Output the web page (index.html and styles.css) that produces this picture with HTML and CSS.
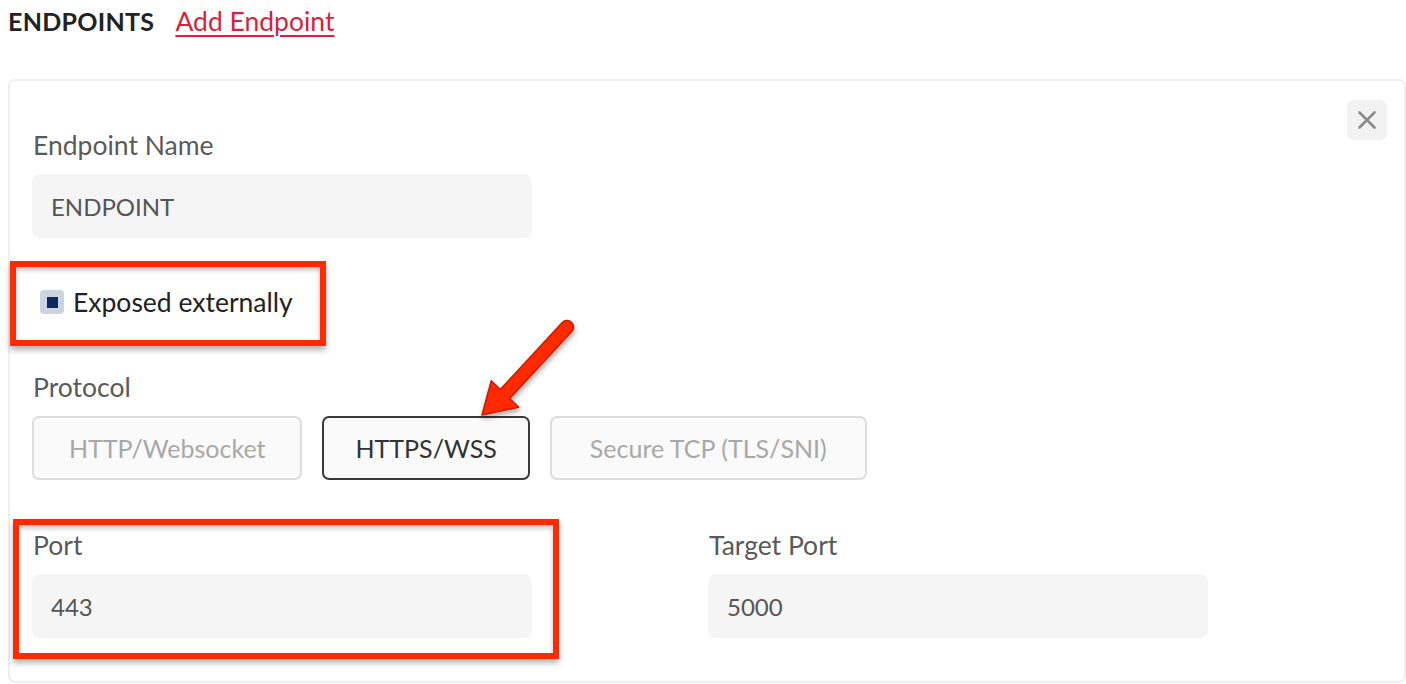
FILE: index.html
```html
<!DOCTYPE html>
<html lang="en">
<head>
<meta charset="utf-8">
<title>Endpoints</title>
<link rel="stylesheet" href="styles.css">
</head>
<body>
<div class="page">
  <div class="section-head">
    <h2 class="section-title">ENDPOINTS</h2>
    <a class="add-link" href="#">Add Endpoint</a>
  </div>

  <div class="card">
    <button class="close-btn" aria-label="Remove endpoint">
      <svg viewBox="0 0 20 20" width="20" height="20"><path d="M2.5 2.5 L17.5 17.5 M17.5 2.5 L2.5 17.5" stroke="#8a8a8a" stroke-width="2.6" stroke-linecap="round" fill="none"/></svg>
    </button>

    <div class="field field-name">
      <label class="field-label">Endpoint Name</label>
      <div class="input">ENDPOINT</div>
    </div>

    <div class="check-row">
      <span class="checkbox"><span class="checkbox-mark"></span></span>
      <span class="check-label">Exposed externally</span>
    </div>

    <div class="field field-protocol">
      <label class="field-label">Protocol</label>
      <div class="btn-group">
        <button class="opt opt-disabled opt-http">HTTP/Websocket</button>
        <button class="opt opt-selected opt-https">HTTPS/WSS</button>
        <button class="opt opt-disabled opt-tcp">Secure TCP (TLS/SNI)</button>
      </div>
    </div>

    <div class="port-grid">
      <div class="field">
        <label class="field-label">Port</label>
        <div class="input">443</div>
      </div>
      <div class="field">
        <label class="field-label">Target Port</label>
        <div class="input">5000</div>
      </div>
    </div>
  </div>

  <div class="annot annot-expose"></div>
  <div class="annot annot-port"></div>
  <svg class="annot-arrow" viewBox="0 0 130 125" width="130" height="125">
    <defs>
      <filter id="sh" x="-30%" y="-30%" width="160%" height="160%">
        <feDropShadow dx="1" dy="3" stdDeviation="2.5" flood-color="#000" flood-opacity="0.35"/>
      </filter>
    </defs>
    <path filter="url(#sh)" d="M22,105 L31.3,70.8 L40.3,79.5 L102.3,12.5 A6.5,6.5 0 0 1 111.7,21.5 L49.7,88.5 L58.7,97.2 Z" fill="#ff2a00" stroke="#c81c00" stroke-width="1.5" stroke-linejoin="round"/>
  </svg>
</div>
</body>
</html>
```

FILE: styles.css
```css
* { box-sizing: border-box; }

html, body {
  margin: 0;
  padding: 0;
  background: #ffffff;
}

body {
  font-family: "Source Sans Pro", Lato, "Liberation Sans", sans-serif;
  color: #222222;
}

.page {
  position: relative;
  padding: 0 0 0 8px;
  width: 1406px;
  height: 684px;
  overflow: hidden;
}

.section-head {
  display: flex;
  align-items: center;
  gap: 21px;
  height: 42px;
  margin-bottom: 37px;
}

.section-title {
  margin: 0;
  font-size: 25px;
  font-weight: 700;
  letter-spacing: 0.3px;
  color: #222222;
}

.add-link {
  font-size: 26.5px;
  color: #dc1f3c;
  text-decoration: underline;
  text-underline-offset: 4px;
  text-decoration-thickness: 2px;
}

.card {
  position: relative;
  border: 2px solid #eeeeee;
  border-radius: 7px;
  padding: 48px 22px 43px 22px;
  margin-right: 0;
}

.close-btn {
  position: absolute;
  top: 19px;
  right: 17px;
  width: 40px;
  height: 40px;
  border: none;
  border-radius: 7px;
  background: #f2f2f2;
  display: flex;
  align-items: center;
  justify-content: center;
  padding: 0;
}

.field {
  display: flex;
  flex-direction: column;
  gap: 13px;
}

.field-label {
  font-size: 26.5px;
  line-height: 32px;
  color: #5a5a5a;
  padding-left: 1px;
}

.input {
  width: 500px;
  height: 64px;
  border-radius: 8px;
  background: #f5f5f5;
  padding: 0 19px;
  display: flex;
  align-items: center;
  font-size: 24px;
  color: #555555;
}

.check-row {
  display: flex;
  align-items: center;
  gap: 9px;
  margin-top: 48px;
  height: 32px;
  padding-left: 8px;
}

.checkbox {
  width: 24px;
  height: 24px;
  border-radius: 4px;
  background: #ccd3e1;
  display: flex;
  align-items: center;
  justify-content: center;
}

.checkbox-mark {
  width: 11px;
  height: 11px;
  background: #0c2a5e;
}

.check-label {
  font-size: 26.5px;
  color: #222222;
}

.field-protocol {
  margin-top: 53px;
}

.btn-group {
  display: flex;
  gap: 20px;
}

.opt {
  height: 64px;
  padding: 0 35px;
  border-radius: 7px;
  font-family: inherit;
  font-size: 25px;
  background: #fafafa;
}

.opt-https { padding: 0 31px; }
.opt-tcp { padding: 0 38px; }

.opt-disabled {
  border: 2px solid #dddddd;
  color: #a8a8a8;
}

.opt-selected {
  border: 2px solid #3a3a3a;
  color: #333333;
}

.port-grid {
  display: grid;
  grid-template-columns: 676px 676px;
  margin-top: 49px;
}

.annot {
  position: absolute;
  border: 6px solid #ff2a00;
  box-shadow: 0 4px 6px rgba(0, 0, 0, 0.3), inset 0 3px 5px rgba(0, 0, 0, 0.25);
}

.annot-expose {
  left: 10px;
  top: 261px;
  width: 316px;
  height: 85px;
}

.annot-port {
  left: 13px;
  top: 519px;
  width: 546px;
  height: 140px;
}

.annot-arrow {
  position: absolute;
  left: 460px;
  top: 310px;
}
```
